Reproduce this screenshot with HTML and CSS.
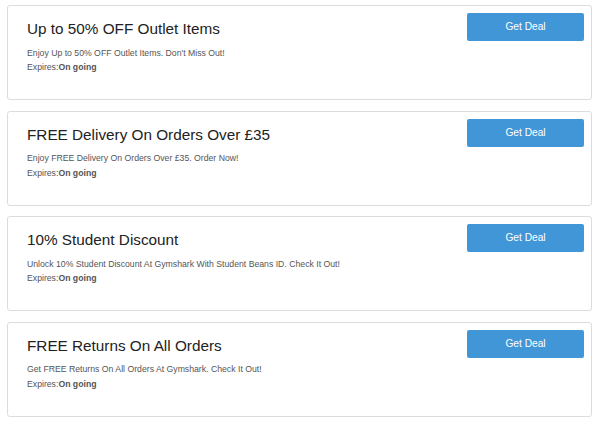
FILE: index.html
```html
<!DOCTYPE html>
<html lang="en">
<head>
    <meta charset="UTF-8">
    <meta name="viewport" content="width=device-width, initial-scale=1.0">
    <title>Gymshark Deals</title>
    <link rel="stylesheet" href="styles.css">
</head>
<body>

<div class="deals">
    <div class="deal">
        <div class="deal-info">
            <h3>Up to 50% OFF Outlet Items</h3>
            <p class="desc">Enjoy Up to 50% OFF Outlet Items. Don't Miss Out!</p>
            <p class="expires">Expires:<b>On going</b></p>
        </div>
        <a href="#" class="btn-deal">Get Deal</a>
    </div>

    <div class="deal">
        <div class="deal-info">
            <h3>FREE Delivery On Orders Over £35</h3>
            <p class="desc">Enjoy FREE Delivery On Orders Over £35. Order Now!</p>
            <p class="expires">Expires:<b>On going</b></p>
        </div>
        <a href="#" class="btn-deal">Get Deal</a>
    </div>

    <div class="deal">
        <div class="deal-info">
            <h3>10% Student Discount</h3>
            <p class="desc">Unlock 10% Student Discount At Gymshark With Student Beans ID. Check It Out!</p>
            <p class="expires">Expires:<b>On going</b></p>
        </div>
        <a href="#" class="btn-deal">Get Deal</a>
    </div>

    <div class="deal">
        <div class="deal-info">
            <h3>FREE Returns On All Orders</h3>
            <p class="desc">Get FREE Returns On All Orders At Gymshark. Check It Out!</p>
            <p class="expires">Expires:<b>On going</b></p>
        </div>
        <a href="#" class="btn-deal">Get Deal</a>
    </div>
</div>

</body>
</html>
```

FILE: styles.css
```css
body {
    font-family: "Liberation Sans", Arial, sans-serif;
    background-color: #fff;
    margin: 0;
    padding: 5px 8px 0 7px;
}

.deal {
    display: flex;
    justify-content: space-between;
    align-items: flex-start;
    height: 95px;
    box-sizing: border-box;
    border: 1px solid #dcdcdc;
    border-radius: 3px;
    margin-bottom: 10.6px;
    padding: 7px 7px 0 19px;
}

.deal-info h3 {
    margin: 7.2px 0 0;
    font-size: 15.3px;
    font-weight: normal;
    color: #222;
    line-height: 18px;
}

.desc,
.expires {
    margin: 0;
    font-size: 8.7px;
    color: #555;
    line-height: 14.4px;
}

.desc {
    margin-top: 7.4px;
}

.expires b {
    font-weight: bold;
}

.btn-deal {
    display: block;
    width: 117px;
    height: 28px;
    line-height: 28px;
    background-color: #4196d8;
    border-radius: 2px;
    color: #fff;
    font-size: 10.2px;
    text-align: center;
    text-decoration: none;
    box-sizing: border-box;
}
```
